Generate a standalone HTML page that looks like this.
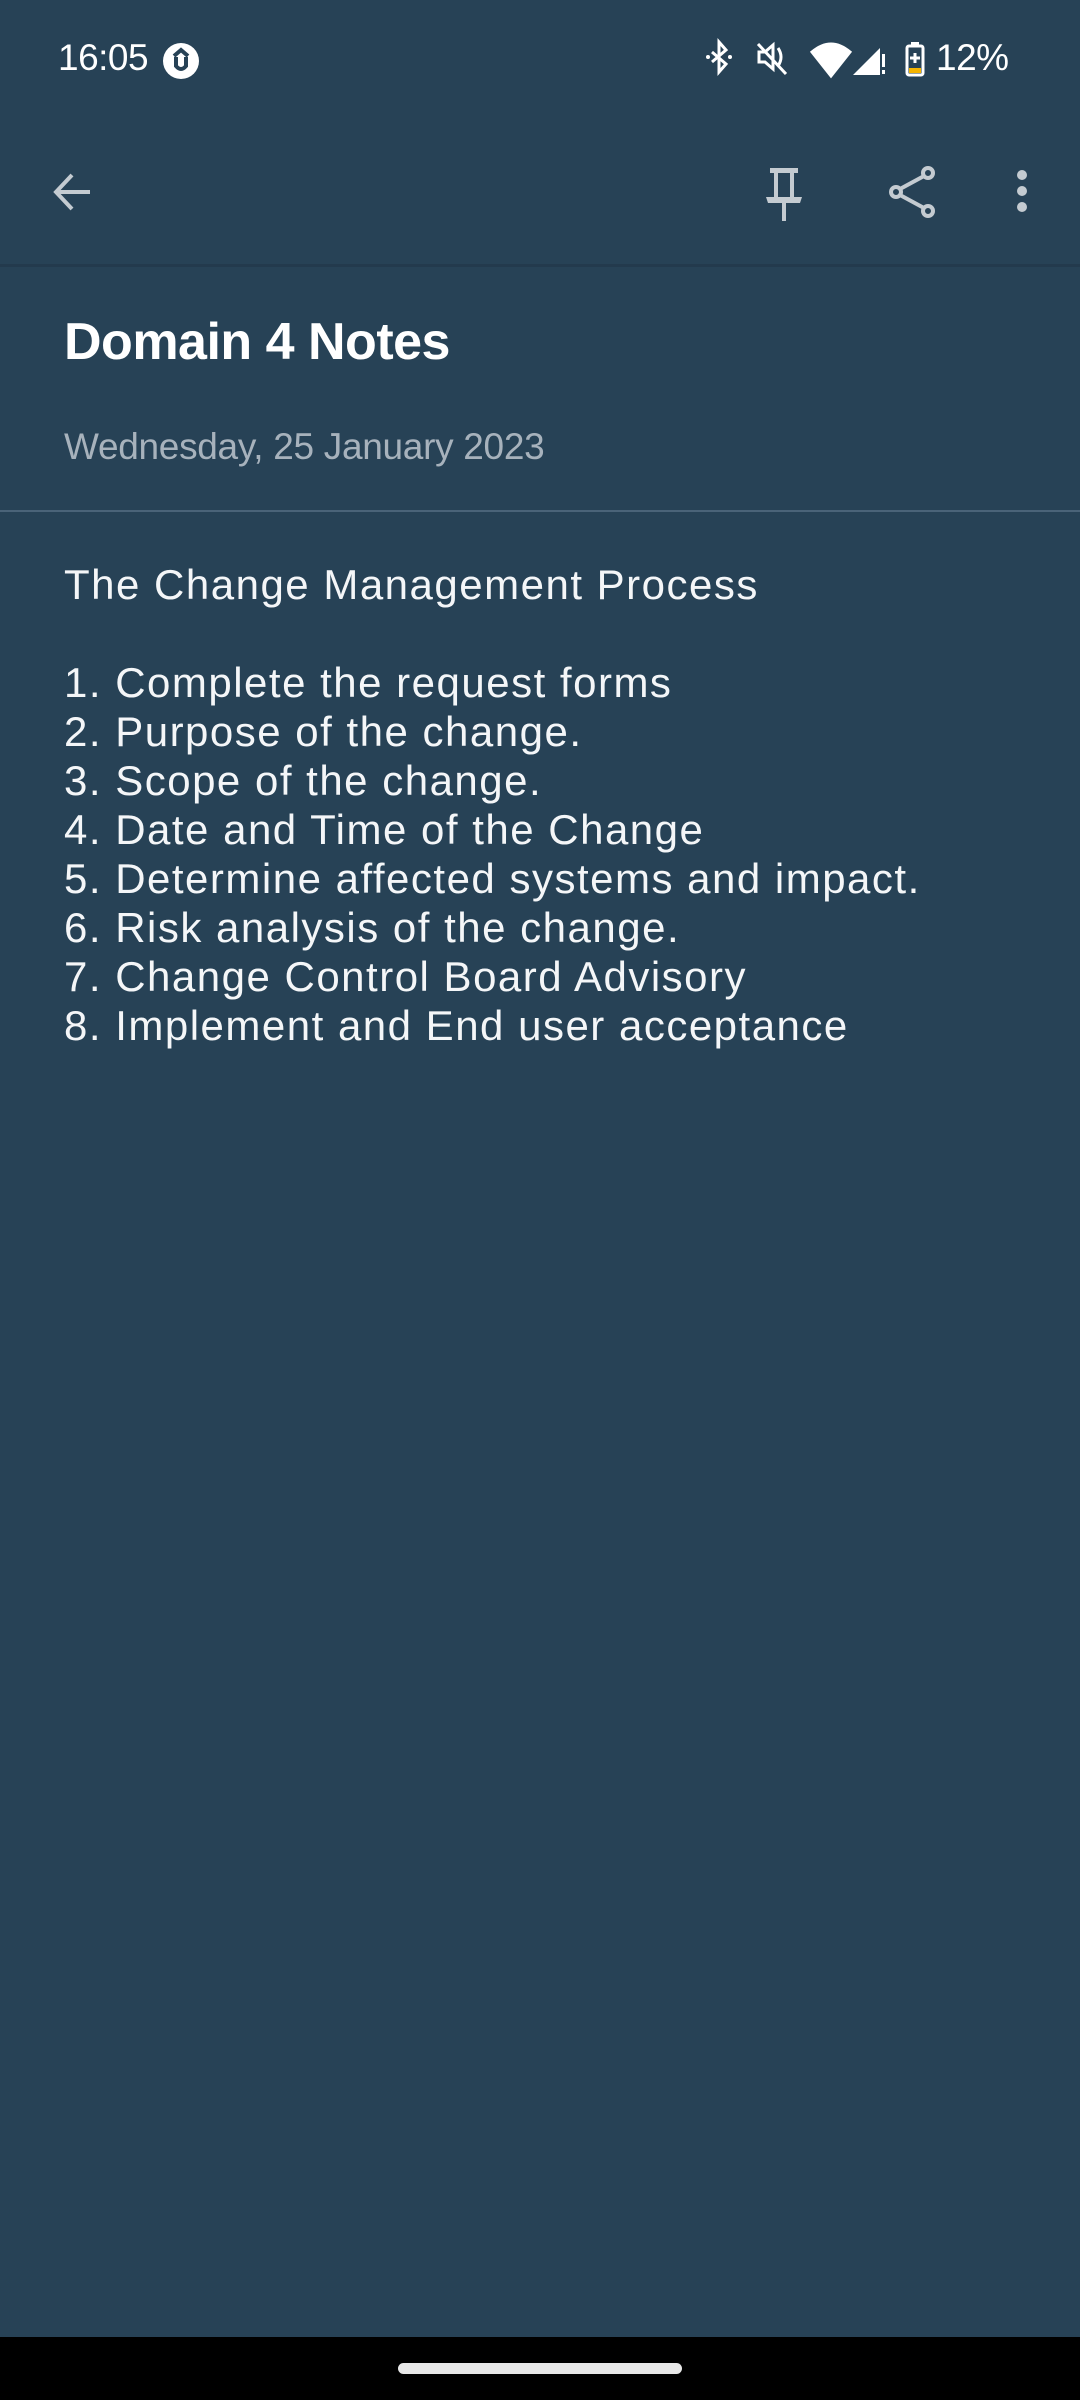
<!DOCTYPE html>
<html><head><meta charset="utf-8"><style>
html,body{margin:0;padding:0}
body{width:1080px;height:2400px;background:#274256;position:relative;overflow:hidden;font-family:"Liberation Sans",sans-serif;color:#fff}
.abs{position:absolute}
.hdrline{top:264px;left:0;width:1080px;height:3px;background:#233a4d}
.title{left:64px;top:312px;font-size:52px;font-weight:bold;letter-spacing:-0.5px}
.date{left:64px;top:426px;font-size:37px;color:#a7b2bc;letter-spacing:-0.3px}
.div{left:0;top:510px;width:1080px;height:2px;background:#4a6378}
.body{left:64px;top:560px;font-size:42px;line-height:49px;white-space:pre;letter-spacing:1.5px;color:#f4f6f8}
.nav{left:0;top:2337px;width:1080px;height:63px;background:#000}
.handle{left:398px;top:2363px;width:284px;height:11px;border-radius:6px;background:#e8e8e8}
.time{left:58px;top:37px;font-size:37px;letter-spacing:-0.5px}
.pct{left:936px;top:37px;font-size:37px;letter-spacing:-0.5px}
</style></head><body>
<div class="abs time">16:05</div>
<svg class="abs" style="left:162px;top:42px" width="38" height="38" viewBox="0 0 38 38"><circle cx="19" cy="19" r="18" fill="#fff"/><path d="M12 14 L19 8 L26 14 M14 15 V24 Q19 30 24 24 V15" fill="none" stroke="#274256" stroke-width="4"/></svg>
<svg class="abs" style="left:700px;top:38px" width="300" height="42" viewBox="0 0 300 42" fill="none" stroke="#fff" stroke-width="3">
<path d="M12 14 L26 26 L19 34 V4 L26 12 L12 24"/>
<circle cx="8" cy="19" r="2" fill="#fff" stroke="none"/><circle cx="30" cy="19" r="2" fill="#fff" stroke="none"/>
<path d="M59 14 h6 l8 -7 v24 l-8 -7 h-6z M78 10 Q84 19 78 28 M58 6 L86 36"/>
<path d="M112 14 Q131 -2 150 14 L131 38 Z" fill="#fff"/>
<path d="M153 37 L182 8 V37Z" fill="#fff" stroke="none"/>
<rect x="180" y="8" width="6" height="30" fill="#274256" stroke="none"/>
<rect x="182" y="16" width="3" height="13" fill="#fff" stroke="none"/><rect x="182" y="32" width="3" height="4" fill="#fff" stroke="none"/>
<rect x="207" y="8" width="16" height="29" rx="2" stroke-width="3"/>
<rect x="211" y="4" width="8" height="4" fill="#fff" stroke="none"/>
<rect x="209" y="30" width="12" height="5" fill="#f5b400" stroke="none"/>
<path d="M215 15 v10 M210 20 h10" stroke-width="3"/>
</svg>
<div class="abs pct">12%</div>
<svg class="abs" style="left:50px;top:170px" width="44" height="44" viewBox="0 0 44 44" fill="none" stroke="#c4cbd1" stroke-width="4"><path d="M40 22 H6 M22 5 L6 22 L22 39"/></svg>
<svg class="abs" style="left:764px;top:165px" width="50" height="60" viewBox="0 0 50 60" fill="#c4cbd1"><rect x="6" y="3" width="28" height="5"/><rect x="10" y="6" width="4" height="26"/><rect x="26" y="6" width="4" height="26"/><path d="M2 32 H38 L36 38 H4Z"/><rect x="18" y="36" width="4" height="20"/></svg>
<svg class="abs" style="left:886px;top:164px" width="56" height="56" viewBox="0 0 56 56" fill="none" stroke="#c4cbd1" stroke-width="4"><circle cx="42" cy="9" r="5"/><circle cx="10" cy="28" r="5"/><circle cx="42" cy="47" r="5"/><path d="M38 12 L14 25 M14 31 L38 44"/></svg>
<svg class="abs" style="left:1012px;top:168px" width="20" height="50" viewBox="0 0 20 50" fill="#c4cbd1"><circle cx="10" cy="7" r="5"/><circle cx="10" cy="23" r="5"/><circle cx="10" cy="39" r="5"/></svg>
<div class="abs hdrline"></div>
<div class="abs title">Domain 4 Notes</div>
<div class="abs date">Wednesday, 25 January 2023</div>
<div class="abs div"></div>
<div class="abs body">The Change Management Process

1. Complete the request forms
2. Purpose of the change.
3. Scope of the change.
4. Date and Time of the Change
5. Determine affected systems and impact.
6. Risk analysis of the change.
7. Change Control Board Advisory
8. Implement and End user acceptance</div>
<div class="abs nav"></div>
<div class="abs handle"></div>
</body></html>
